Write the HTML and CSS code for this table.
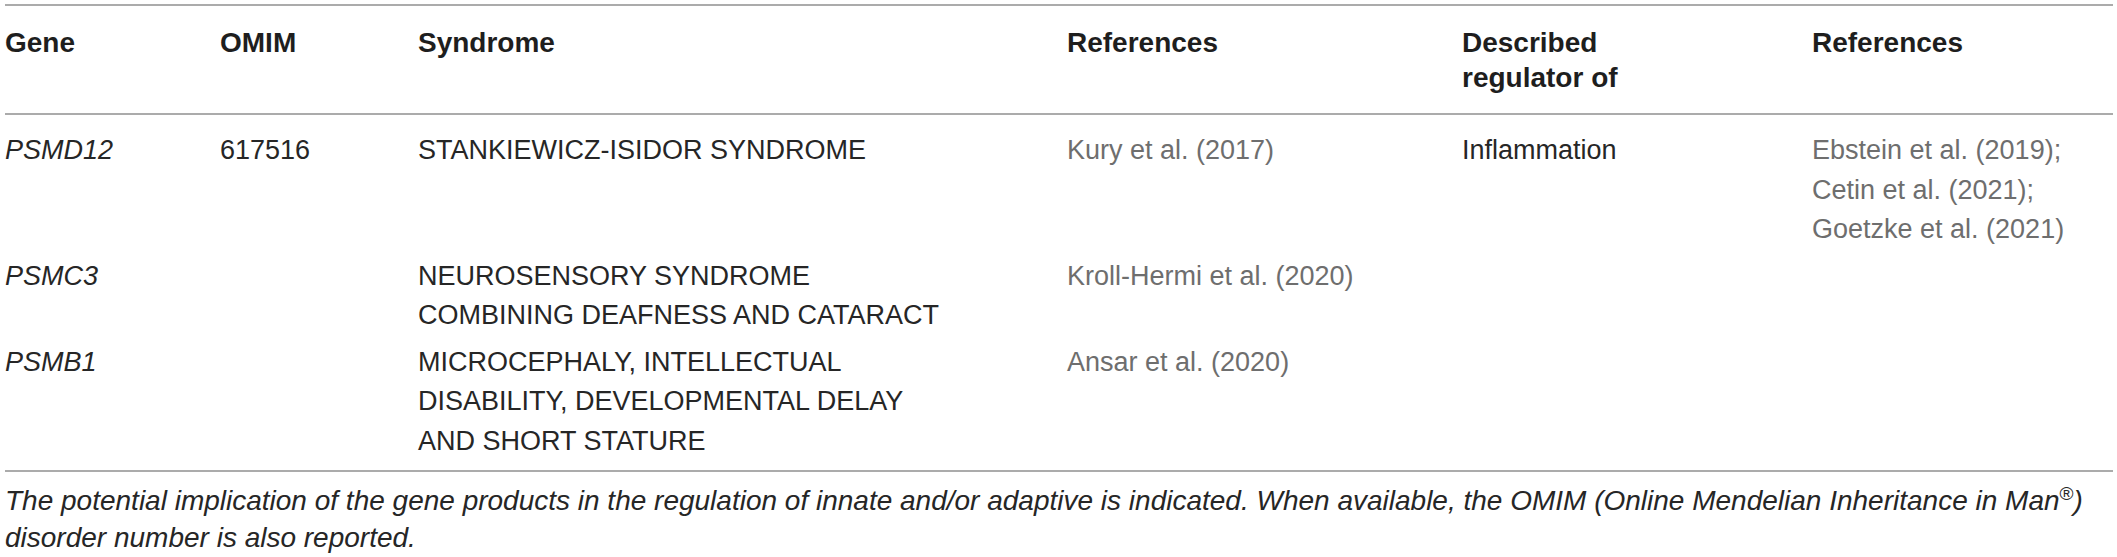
FILE: index.html
```html
<!DOCTYPE html>
<html lang="en">
<head>
<meta charset="utf-8">
<title>Table</title>
<link rel="stylesheet" href="styles.css">
</head>
<body>
<div class="wrap">
  <table class="data">
    <colgroup>
      <col class="c-gene">
      <col class="c-omim">
      <col class="c-syn">
      <col class="c-ref">
      <col class="c-reg">
      <col class="c-ref2">
    </colgroup>
    <thead>
      <tr>
        <th>Gene</th>
        <th>OMIM</th>
        <th>Syndrome</th>
        <th>References</th>
        <th>Described<br>regulator of</th>
        <th>References</th>
      </tr>
    </thead>
    <tbody>
      <tr>
        <td class="gene">PSMD12</td>
        <td>617516</td>
        <td class="syn">STANKIEWICZ-ISIDOR SYNDROME</td>
        <td class="ref">Kury et al. (2017)</td>
        <td>Inflammation</td>
        <td class="ref">Ebstein et al. (2019); Cetin et al. (2021); Goetzke et al. (2021)</td>
      </tr>
      <tr>
        <td class="gene">PSMC3</td>
        <td></td>
        <td class="syn">NEUROSENSORY SYNDROME COMBINING DEAFNESS AND CATARACT</td>
        <td class="ref">Kroll-Hermi et al. (2020)</td>
        <td></td>
        <td></td>
      </tr>
      <tr>
        <td class="gene">PSMB1</td>
        <td></td>
        <td class="syn">MICROCEPHALY, INTELLECTUAL DISABILITY, DEVELOPMENTAL DELAY AND SHORT STATURE</td>
        <td class="ref">Ansar et al. (2020)</td>
        <td></td>
        <td></td>
      </tr>
    </tbody>
  </table>
  <p class="note">The potential implication of the gene products in the regulation of innate and/or adaptive is indicated. When available, the OMIM (Online Mendelian Inheritance in <span class="nw">Man<sup>®</sup>)</span> disorder number is also reported.</p>
</div>
</body>
</html>
```

FILE: styles.css
```css
html, body {
  margin: 0;
  padding: 0;
  background: #ffffff;
}

body {
  font-family: "Liberation Sans", Arial, Helvetica, sans-serif;
  font-size: 27px;
  line-height: 39.5px;
  color: #262626;
}

.wrap {
  padding: 4px 4px 0 5px;
}

.data {
  width: 100%;
  border-collapse: collapse;
  table-layout: fixed;
  border-top: 2px solid #ababab;
  border-bottom: 2px solid #ababab;
}

.c-gene { width: 215px; }
.c-omim { width: 198px; }
.c-syn  { width: 649px; }
.c-ref  { width: 395px; }
.c-reg  { width: 350px; }

.data th,
.data td {
  text-align: left;
  vertical-align: top;
  padding: 3px 20px 4px 0;
}

.data th {
  font-size: 28px;
  line-height: 35px;
  font-weight: bold;
  color: #1e1e1e;
  padding-top: 19px;
  padding-bottom: 18px;
  border-bottom: 2px solid #ababab;
}

.data tbody tr:first-child td {
  padding-top: 16px;
}

.data tbody tr:last-child td {
  padding-bottom: 9px;
}

.data td.syn {
  padding-right: 120px;
}

.gene {
  font-style: italic;
}

.ref {
  color: #6e6e6e;
}

.note {
  margin: 10px 0 0 0;
  font-size: 28px;
  line-height: 37px;
  font-style: italic;
  color: #262626;
}

.nw {
  white-space: nowrap;
}

.note sup {
  font-style: normal;
  font-size: 19px;
  line-height: 0;
  vertical-align: 10px;
}
```
